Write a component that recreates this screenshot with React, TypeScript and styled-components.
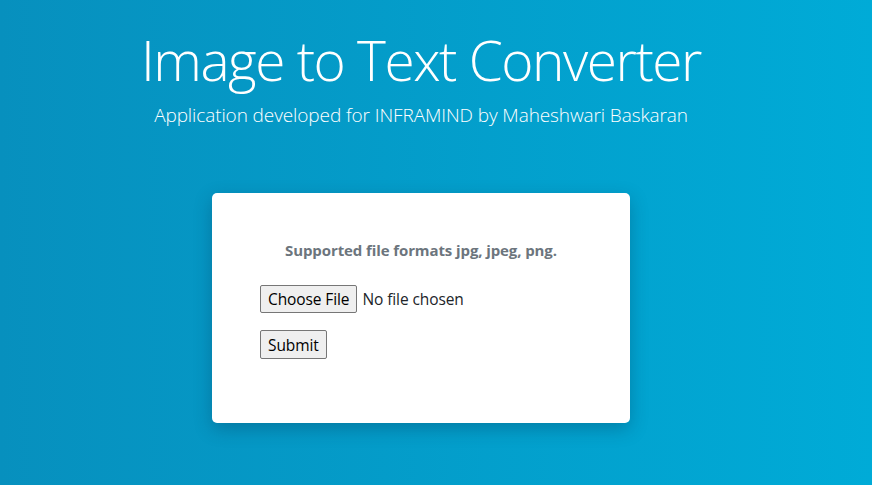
import React from "react";
import styled, { createGlobalStyle } from "styled-components";

const Global = createGlobalStyle`
  html, body { margin: 0; padding: 0; }
  body {
    font-family: "Open Sans", "Noto Sans", sans-serif;
    background: linear-gradient(to right, #0790be, #00abd7);
    min-height: 485px;
  }
`;

const Page = styled.main`
  min-height: 485px;
  box-sizing: border-box;
  padding: 20px 30px 0 0;
  display: flex;
  flex-direction: column;
  align-items: center;
  color: #fff;
`;

const Title = styled.h1`
  margin: 0;
  font-family: "Open Sans", sans-serif;
  font-weight: 300;
  font-size: 55px;
  line-height: 80px;
  letter-spacing: -1.5px;
`;

const Subtitle = styled.p`
  margin: 0;
  font-family: "Open Sans", sans-serif;
  font-weight: 300;
  font-size: 19px;
  line-height: 30px;
  letter-spacing: -0.1px;
`;

const Card = styled.section`
  margin-top: 63px;
  width: 418px;
  height: 230px;
  box-sizing: border-box;
  background: #fff;
  border-radius: 5px;
  box-shadow: 0 6px 18px rgba(0, 40, 70, 0.28);
  padding: 46px 48px 0;
  display: flex;
  flex-direction: column;
  color: #212529;
`;

const Note = styled.p`
  margin: 0 0 24px;
  text-align: center;
  font-weight: 700;
  font-size: 15px;
  line-height: 22px;
  color: #6c757d;
  letter-spacing: -0.1px;
`;

const Row = styled.div`
  display: flex;
  align-items: center;
  gap: 5px;
  margin-bottom: 17px;
`;

const NativeButton = styled.button<{ $h?: number }>`
  font-family: "Open Sans", "Noto Sans", sans-serif;
  font-size: 15.5px;
  line-height: 20px;
  color: #000;
  background: #efefef;
  border: 1px solid #767676;
  border-radius: 2px;
  padding: 0 7px;
  height: ${(p) => p.$h ?? 28}px;
  display: inline-flex;
  align-items: center;
  box-sizing: border-box;
  cursor: pointer;
  letter-spacing: -0.1px;
`;

const FileName = styled.span`
  font-size: 15.5px;
  color: #212529;
  letter-spacing: -0.1px;
`;

const HiddenInput = styled.input`
  display: none;
`;

export default function App() {
  return (
    <>
      <Global />
      <Page>
        <Title>Image to Text Converter</Title>
        <Subtitle>Application developed for INFRAMIND by Maheshwari Baskaran</Subtitle>
        <Card>
          <Note>Supported file formats jpg, jpeg, png.</Note>
          <Row as="label">
            <HiddenInput type="file" accept=".jpg,.jpeg,.png" />
            <NativeButton as="span">Choose File</NativeButton>
            <FileName>No file chosen</FileName>
          </Row>
          <Row>
            <NativeButton type="submit" $h={29}>Submit</NativeButton>
          </Row>
        </Card>
      </Page>
    </>
  );
}
